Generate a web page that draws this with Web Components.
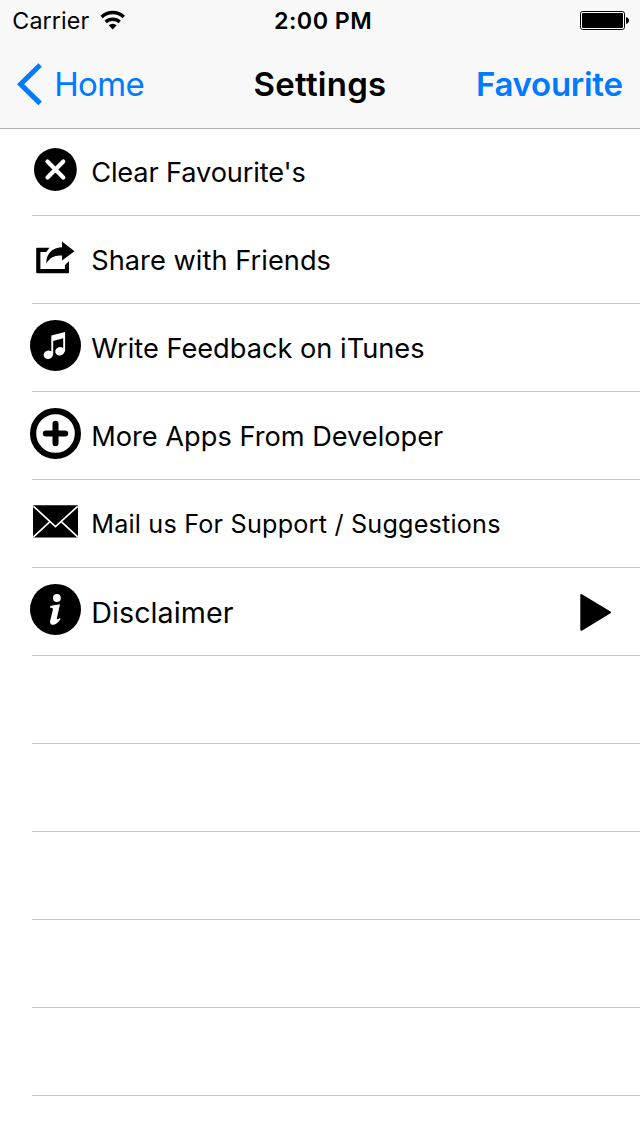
<!DOCTYPE html>
<html lang="en">
<head>
<meta charset="utf-8">
<title>Settings</title>
<style>
html, body { margin: 0; height: 100%; }
body { background: #fff; color: #000; font-family: Inter, "Liberation Sans", sans-serif; overflow: hidden; }
</style>
</head>
<body>
<settings-screen></settings-screen>
<script>
const define = (name, html) => {
  const template = document.createElement('template');
  template.innerHTML = html;
  customElements.define(name, class extends HTMLElement {
    constructor() {
      super();
      this.attachShadow({ mode: 'open' }).append(template.content.cloneNode(true));
    }
  });
};

define('status-bar', `
<style>
:host { display: grid; grid-template-columns: 1fr auto 1fr; align-items: center; box-sizing: border-box; height: 40px; padding: 1px 11px 0 12.3px; font-size: 23.3px; line-height: 28px; white-space: nowrap; }
.left { display: flex; align-items: center; gap: 11px; letter-spacing: .1px; }
.left svg { margin-bottom: 1px; }
.time { font-weight: 600; letter-spacing: .45px; margin-left: 5px; }
svg { display: block; }
.battery { justify-self: end; margin-bottom: 0; }
</style>
<div class="left"><span>Carrier</span>
<svg width="26" height="20" viewBox="0 0 26 20"><g fill="none" stroke="#000" stroke-width="3.3"><path d="M1.6 7a16 16 0 0 1 22.200 0"/><path d="M5.700 12a10.300 10.300 0 0 1 14 0"/></g><path d="M8.700 15.200a6 6 0 0 1 8 0L12.700 19.400z"/></svg></div>
<span class="time">2:00 PM</span>
<svg class="battery" width="49" height="19" viewBox="0 0 49 19"><rect x=".5" y=".5" width="44" height="18" rx="2.2" fill="#fff" stroke="#000"/><rect x="2" y="2" width="41" height="15" rx="1"/><path d="M46 6.2c1.8.1 3 1.4 3 3.3s-1.2 3.2-3 3.3z"/></svg>
`);

define('nav-bar', `
<style>
:host { display: grid; grid-template-columns: 1fr auto 1fr; align-items: center; box-sizing: border-box; height: 88px; padding: 0 17.4px 0 16.2px; font-size: 33px; line-height: 40px; white-space: nowrap; }
.back { display: flex; align-items: center; gap: 11px; color: #007aff; letter-spacing: -.6px; }
.title { font-weight: 600; letter-spacing: .27px; margin-left: 1.2px; }
.action { justify-self: end; color: #007aff; font-weight: 600; letter-spacing: -.28px; }
svg { display: block; }
</style>
<div class="back"><svg width="27" height="44" viewBox="0 0 27 44"><path d="M24.1 3 4.6 22.2 24.1 41.4" fill="none" stroke="#007aff" stroke-width="5"/></svg><slot name="back"></slot></div>
<span class="title"><slot></slot></span>
<span class="action"><slot name="action"></slot></span>
`);

define('top-bar', `
<style>
:host { display: block; height: 128px; background: #f8f8f8; box-shadow: 0 1px 0 #b2b2b2; }
</style><slot></slot>`);

define('list-row', `
<style>
:host { display: flex; align-items: center; height: 88px; font-size: 27.2px; line-height: 34px; white-space: nowrap;
  background: linear-gradient(#c8c7cc, #c8c7cc) 32px 100% / 100% 1px no-repeat; }
.icon { width: 91.2px; height: 88px; flex: none; }
.label { flex: 1; padding-top: var(--label-drop, 2px); }
</style>
<div class="icon"><slot name="icon"></slot></div>
<span class="label"><slot></slot></span>
<slot name="accessory"></slot>`);

const icon = (name, body) => define(name, `
<style>:host { display: block; } svg { display: block; }</style>
<svg width="91" height="88" viewBox="0 0 91 88">${body}</svg>`);

icon('icon-clear', `<circle cx="55.4" cy="41.5" r="21.4"/><path d="M47.5 33.6 63.3 49.4M63.3 33.6 47.5 49.4" stroke="#fff" stroke-width="4.2" stroke-linecap="round"/>`);
icon('icon-share', `<path d="M49.5 31.8H37.2a1 1 0 0 0-1 1V56.300a1 1 0 0 0 1 1H68a1 1 0 0 0 1-1V45L64.900 49.200V53.100H40.400V36H46.300z"/><path d="M62 25.600 74.500 35.200 62 44.600V39.500C55 38.800 49.500 41.500 46.300 47.700 46 38 52 31.500 62 31.200z"/>`);
icon('icon-music', `<circle cx="55.5" cy="41.400" r="25.500"/><g fill="#fff"><ellipse cx="48.300" cy="50.800" rx="4.700" ry="4.200" transform="rotate(-15 48.300 50.800)"/><ellipse cx="59.900" cy="47.300" rx="4.700" ry="4.200" transform="rotate(-15 59.900 47.300)"/><path d="M51.300 31.500 65.100 28V47.500H63.200V34.200L53.200 37V50.800H51.300z"/></g>`);
icon('icon-plus', `<circle cx="55.500" cy="41.500" r="22.400" fill="none" stroke="#000" stroke-width="6.200"/><path d="M45.800 41.500H65.200M55.500 31.800V51.200" stroke="#000" stroke-width="6" stroke-linecap="round"/>`);
icon('icon-mail', `<rect x="33" y="25.200" width="45" height="32.300" rx="1"/><path d="M33.500 26.300 55.500 46.600 77.700 26.300M33.500 56.900 49.400 42.200M77.700 56.900 61.800 42.200" fill="none" stroke="#fff" stroke-width="1.700"/>`);
icon('icon-info', `<circle cx="55.500" cy="41.400" r="25.500"/><g fill="#fff"><circle cx="56.900" cy="30" r="3.900"/><path d="M50.200 38.100C53.500 37.600 56.500 36.700 60 36.300L56.900 50.100C56.500 52 57.600 52.100 59.500 50.100L60.500 51C58.300 54.800 55.600 56.800 52.900 56.800 50.300 56.800 49.700 54.800 50.300 52.300L52.900 41.500C53.200 40.200 52.300 39.700 50.200 39.700z"/></g>`);

define('icon-play', `
<style>:host { display: block; margin-right: 28px; }svg { display: block; }</style>
<svg width="32" height="88" viewBox="0 0 32 88"><path d="M1.300 27 30 44.400 1.300 61.800z" stroke="#000" stroke-width="2" stroke-linejoin="round"/></svg>`);

define('settings-screen', `
<style>
:host { display: block; height: 1136px; overflow: hidden; background: #fff; }
top-bar { position: relative; }
.mail { --label-drop: 0px; font-size: 25.2px; letter-spacing: .2px; }
.large { font-size: 28.7px; letter-spacing: .05px; line-height: 36px; }
.clear { letter-spacing: -.14px; }
.share { letter-spacing: .05px; }
</style>
<top-bar>
  <status-bar></status-bar>
  <nav-bar><span slot="back">Home</span>Settings<span slot="action">Favourite</span></nav-bar>
</top-bar>
<list-row class="clear"><icon-clear slot="icon"></icon-clear>Clear Favourite's</list-row>
<list-row class="share"><icon-share slot="icon"></icon-share>Share with Friends</list-row>
<list-row><icon-music slot="icon"></icon-music>Write Feedback on iTunes</list-row>
<list-row><icon-plus slot="icon"></icon-plus>More Apps From Developer</list-row>
<list-row class="mail"><icon-mail slot="icon"></icon-mail>Mail us For Support / Suggestions</list-row>
<list-row class="large"><icon-info slot="icon"></icon-info>Disclaimer<icon-play slot="accessory"></icon-play></list-row>
<list-row></list-row><list-row></list-row><list-row></list-row><list-row></list-row><list-row></list-row>
`);
</script>
</body>
</html>
